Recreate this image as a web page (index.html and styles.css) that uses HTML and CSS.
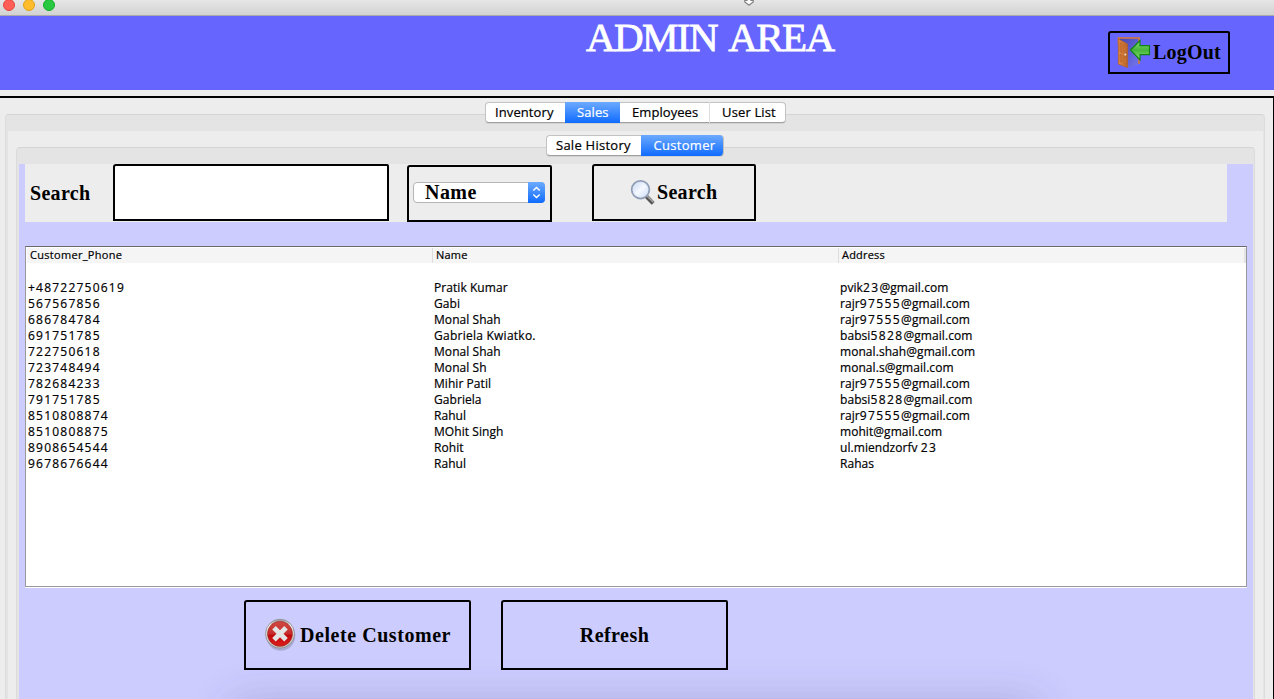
FILE: index.html
```html
<!DOCTYPE html>
<html lang="en">
<head>
<meta charset="utf-8">
<title>Admin Area</title>
<link rel="stylesheet" href="styles.css">
</head>
<body>
<div class="window">
  <div class="titlebar">
    <i class="dot red"></i><i class="dot yellow"></i><i class="dot green"></i>
    <svg class="pointer" width="12" height="8" viewBox="0 0 12 8"><path d="M4 -2v2.500H1.800v1.500L6 5.200l4.200-3.200V.5H8V-2z" fill="#fff" stroke="#808080" stroke-width="1.200"/></svg>
  </div>
  <header class="header">
    <h1 class="title">ADMIN AREA</h1>
    <button class="box logout">
      <svg width="34" height="34" viewBox="0 0 34 34">
        <defs>
          <linearGradient id="door" x2="1"><stop stop-color="#e58a43"/><stop offset="1" stop-color="#b9652a"/></linearGradient>
          <linearGradient id="arrow" x2="0" y2="1"><stop stop-color="#8bdc70"/><stop offset=".5" stop-color="#45b53a"/><stop offset="1" stop-color="#8fe078"/></linearGradient>
          <linearGradient id="space" x2="1" y2="1"><stop stop-color="#4444b8"/><stop offset="1" stop-color="#7777ed"/></linearGradient>
        </defs>
        <path d="M2 2h20v26l-10 4z" fill="url(#space)"/>
        <path d="M1.500 8V2h20.500V11M22 23v5" fill="none" stroke="#d9782f" stroke-width="1.600"/>
        <path d="M1.300 3l9.200 5v23.500L1.300 28z" fill="url(#door)" stroke="#b3622a" stroke-width=".8"/>
        <path d="M3 6.500l2 1v9l-2-1zM7 8.500l2 1v8l-2-1zM3 18.500l2 .6v7l-2-.8zM7 20.500l2 .7v7l-2-.8z" fill="#cf7636" stroke="#a95c27" stroke-width=".5"/>
        <circle cx="8.300" cy="18.500" r="1" fill="#e8e2d0"/>
        <path d="M13.500 14L23 4.500v5.200h9.500v9H23v5.200z" fill="url(#arrow)" stroke="#118318" stroke-width="1.200"/>
      </svg>
      <span class="serif w-logout">LogOut</span>
    </button>
  </header>
  <main class="body">
    <section class="pane outer">
      <nav class="tabs tabs-main">
        <span class="tab t1">Inventory</span><span class="tab on t2">Sales</span><span class="tab t3">Employees</span><span class="tab t4">User List</span>
      </nav>
      <div class="outer-content">
        <section class="pane inner">
          <nav class="tabs tabs-sub">
            <span class="tab s1">Sale History</span><span class="tab on s2">Customer</span>
          </nav>
          <div class="content">
            <div class="searchbar">
              <label class="serif label">Search</label>
              <input class="box field" type="text" aria-label="Search">
              <div class="box choice">
                <div class="combo"><span class="serif w-name">Name</span>
                  <span class="stepper"><svg width="17" height="21" viewBox="0 0 17 21"><path d="M5.300 8.500l3.200-3 3.200 3M5.300 12.500l3.200 3 3.200-3" fill="none" stroke="#fff" stroke-width="1.500"/></svg></span>
                </div>
              </div>
              <button class="box find">
                <svg width="26" height="26" viewBox="0 0 26 26">
                  <defs><linearGradient id="lens" x2="1" y2="1"><stop stop-color="#c2d3ef"/><stop offset=".5" stop-color="#f5f9ff"/><stop offset="1" stop-color="#c8dafa"/></linearGradient></defs>
                  <path d="M16 16l7.200 7.400" stroke="#555" stroke-width="4"/>
                  <path d="M16 15l7.500 7.200" stroke="#aaa" stroke-width="1.400"/>
                  <circle cx="10.500" cy="9.700" r="8.800" fill="url(#lens)" stroke="#8f9db5" stroke-width="1.800"/>
                  <circle cx="10.500" cy="9.700" r="7.300" fill="none" stroke="#dce5f5" stroke-width=".8"/>
                </svg>
                <span class="serif w-search">Search</span>
              </button>
            </div>
            <div class="table">
              <div class="row thead"><span class="h1">Customer_Phone</span><span class="h2">Name</span><span class="h3">Address</span></div>
              <div class="row first"></div>
              <div class="row"><span class="num">+48722750619</span><span>Pratik Kumar</span><span>pvik<i>23</i>@gmail.com</span></div>
              <div class="row"><span class="num">567567856</span><span>Gabi</span><span>rajr<i>97555</i>@gmail.com</span></div>
              <div class="row"><span class="num">686784784</span><span>Monal Shah</span><span>rajr<i>97555</i>@gmail.com</span></div>
              <div class="row"><span class="num">691751785</span><span class="wide">Gabriela Kwiatko.</span><span>babsi<i>5828</i>@gmail.com</span></div>
              <div class="row"><span class="num">722750618</span><span>Monal Shah</span><span>monal.shah@gmail.com</span></div>
              <div class="row"><span class="num">723748494</span><span>Monal Sh</span><span>monal.s@gmail.com</span></div>
              <div class="row"><span class="num">782684233</span><span>Mihir Patil</span><span>rajr<i>97555</i>@gmail.com</span></div>
              <div class="row"><span class="num">791751785</span><span>Gabriela</span><span>babsi<i>5828</i>@gmail.com</span></div>
              <div class="row"><span class="num">8510808874</span><span>Rahul</span><span>rajr<i>97555</i>@gmail.com</span></div>
              <div class="row"><span class="num">8510808875</span><span>MOhit Singh</span><span>mohit@gmail.com</span></div>
              <div class="row"><span class="num">8908654544</span><span>Rohit</span><span>ul.miendzorfv <i>23</i></span></div>
              <div class="row"><span class="num">9678676644</span><span>Rahul</span><span>Rahas</span></div>
            </div>
            <div class="actions">
              <button class="box action">
                <svg width="32" height="34" viewBox="0 0 32 34">
                  <defs>
                    <linearGradient id="ring" x2="0" y2="1"><stop stop-color="#999"/><stop offset=".2" stop-color="#eee"/><stop offset="1" stop-color="#bbb"/></linearGradient>
                    <linearGradient id="redball" x2="0" y2="1"><stop stop-color="#cf4a43"/><stop offset=".5" stop-color="#c62e2d"/><stop offset=".55" stop-color="#c00b0d"/><stop offset="1" stop-color="#dd1c1c"/></linearGradient>
                  </defs>
                  <ellipse cx="16.800" cy="17.800" rx="14.500" ry="15" fill="#77779a" opacity=".4"/>
                  <circle cx="16" cy="15.800" r="14.500" fill="url(#ring)" stroke="#8a8a8a" stroke-width=".8"/>
                  <circle cx="16" cy="15.800" r="12.500" fill="url(#redball)" stroke="#9d2020" stroke-width=".6"/>
                  <path d="M10 9.800l12 12M22 9.800l-12 12" stroke="#e4e4e4" stroke-width="5"/>
                </svg>
                <span class="serif w-delete">Delete Customer</span>
              </button>
              <button class="box action"><span class="serif w-refresh">Refresh</span></button>
            </div>
          </div>
        </section>
      </div>
    </section>
  </main>
  <div class="shade"></div>
</div>
</body>
</html>
```
FILE: styles.css
```css
* { box-sizing: border-box; }
body { margin: 0; background: #ededed; font-family: "Open Sans", "Noto Sans", sans-serif; color: #000; }
button, input { font: inherit; margin: 0; padding: 0; background: none; }
svg { display: block; flex: none; }
.window { width: 1274px; height: 699px; overflow: hidden; display: flex; flex-direction: column; position: relative; }
.titlebar { height: 16px; flex: none; background: linear-gradient(#e6e6e6, #d2d2d2); border-bottom: 1px solid #aaa; padding-left: 3px; display: flex; gap: 8px; position: relative; }
.dot { width: 12px; height: 12px; border-radius: 50%; margin-top: -1px; border: 1px solid; }
.red { background: #ff5f57; border-color: #e2463f; }
.yellow { background: #ffbd2e; border-color: #e1a116; }
.green { background: #28c940; border-color: #12ac28; }
.pointer { position: absolute; left: 743px; top: 0; }
.header { height: 74px; flex: none; background: #6666ff; display: flex; padding-left: 586px; }
.title { margin: 0; width: 522px; font: 400 41px/43px "Liberation Serif", serif; color: #fff; white-space: nowrap; letter-spacing: -1.6px; word-spacing: 5px; -webkit-text-stroke: .8px #fff; }
.serif { font: 700 20px/22px "Liberation Serif", serif; white-space: nowrap; letter-spacing: .3px; padding-bottom: 1px; }
.w-logout { letter-spacing: .2px; }
.w-name { letter-spacing: .45px; padding-bottom: 0; }
.w-delete { letter-spacing: .56px; }
.w-refresh { letter-spacing: .45px; }
.box { border: 2px solid #000; border-radius: 3px 2px 0 0; display: flex; align-items: center; }
.logout { width: 122px; height: 43px; margin-top: 15px; padding-left: 7px; gap: 2px; }
.body { height: 603px; margin-top: 6px; border-top: 2px solid #000; border-right: 1px solid #000; padding: 16px 8px 0 5px; background: #ededed; }
.pane { border: 1px solid #d6d6d6; border-color: #d4d4d4 #dcdcdc; border-bottom: 0; border-radius: 4px 4px 0 0; background: #e4e4e4; display: flex; flex-direction: column; align-items: center; }
.outer { height: 590px; padding: 0 1px 0 2px; }
.outer-content { align-self: stretch; background: #ededed; padding: 16px 8px 0; margin-top: 8px; }
.inner { height: 560px; padding: 0 1px 0 2px; }
.tabs { display: flex; height: 21px; margin-top: -13px; background: #fff; border: 1px solid #c2c2c2; border-bottom-color: #a0a0a0; border-radius: 4px; font-size: 13px; line-height: 20px; flex: none; box-shadow: 0 1px 0 #d2d2d2; -webkit-text-stroke: .2px; }
.tabs-main { width: 301px; }
.tabs-sub { width: 178px; margin-right: 2px; }
.tab { height: 21px; margin-top: -1px; padding-left: 9px; white-space: nowrap; }
.on { background: linear-gradient(#6caaff, #0f6bff); color: #fff; }
.t1 { width: 79px; letter-spacing: .1px; }
.t2 { width: 55px; padding-left: 12px; letter-spacing: .1px; }
.t3 { width: 90px; border-right: 1px solid #ddd; padding-left: 12px; letter-spacing: .07px; }
.t4 { padding-left: 12px; letter-spacing: .15px; }
.s1 { width: 95px; letter-spacing: .26px; }
.s2 { width: 82px; padding-left: 12px; border-radius: 0 4px 4px 0; letter-spacing: .32px; }
.content { align-self: stretch; height: 535px; margin-top: 8px; background: #ccccff; padding: 0 6px; }
.searchbar { width: 1202px; height: 58px; background: #ededed; display: flex; align-items: flex-start; }
.label { width: 88px; padding: 18px 0 0 5px; }
.field { width: 276px; height: 57px; background: #fff; outline: 0; }
.choice { width: 145px; height: 57px; margin: 1px 0 0 18px; padding-left: 4px; }
.combo { width: 132px; height: 21px; margin-top: -3px; display: flex; align-items: center; justify-content: space-between; background: #fff; border: 1px solid #b5b5b5; border-radius: 4px; padding-left: 11px; }
.stepper { margin: -1px -1px -1px 0; border-radius: 0 4px 4px 0; background: linear-gradient(#6caaff, #0f6bff); }
.find { width: 164px; height: 57px; margin-left: 40px; padding-left: 36px; gap: 1px; }
.table { width: 1222px; height: 341px; margin-top: 24px; background: #fff; border: 1px solid #999; border-top-color: #696969; box-shadow: 0 1px 0 #fff; padding-top: 1px; }
.row { height: 16px; display: grid; grid-template-columns: 406px 406px 1fr; padding-left: 2px; font-size: 12px; line-height: 16px; letter-spacing: .06px; white-space: nowrap; -webkit-text-stroke: .2px #000; }
.row i { font-style: normal; letter-spacing: 1.4px; }
.row .num { letter-spacing: 1.22px; }
.row .wide { letter-spacing: .25px; }
.first { height: 17px; }
.thead { height: 15px; margin-left: 1px; background: #f5f5f5; font-size: 11px; line-height: 14px; padding-left: 1px; border-right: 2px solid #e4e4e4; }
.thead span + span { border-left: 1px solid #ddd; padding-left: 3px; margin-left: -2px; letter-spacing: .2px; }
.thead .h1 { padding-left: 2px; letter-spacing: .3px; }
.actions { display: flex; gap: 30px; margin: 13px 0 0 219px; }
.action { width: 227px; height: 70px; justify-content: center; gap: 4px; }
.shade { position: absolute; left: 240px; top: 712px; width: 790px; height: 40px; box-shadow: 0 0 44px 8px rgba(50, 50, 80, .24); }
```
